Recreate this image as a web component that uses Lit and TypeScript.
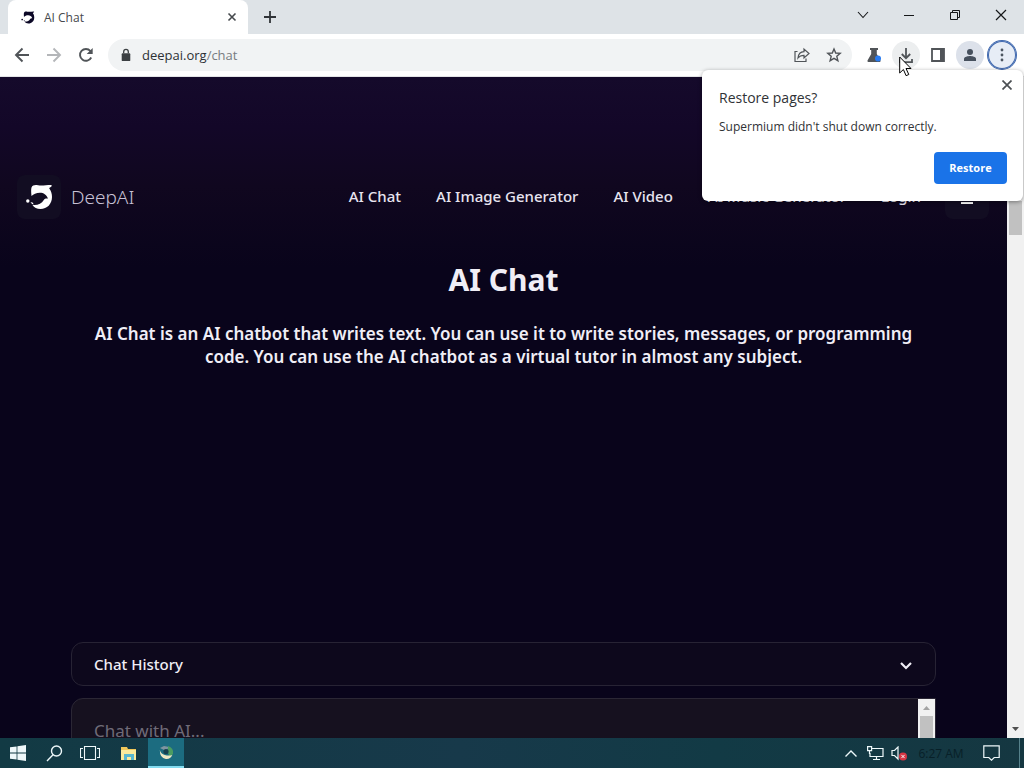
import { LitElement, html, css, svg } from "lit";
import { customElement } from "lit/decorators.js";

const bird = svg`
  <path fill="currentColor" d="M5.500 12C5 8 5 5 5.500 3.500 6.500 1.200 9 .8 12 1.300c4 .6 8-.2 13-.3 1.200.1 1 1.600-1 2.400-.8.300-1 .9-.4 1.600 1.600 2 2.400 5 2.400 8 0 7-5 12-11.500 12-3.500 0-6.500-1.500-8-4 5 .6 9-1 11.300-5 .9-1.500 2.200-1.700 4.200-1.500C20.500 10.500 17.500 8.700 14 8.700c-4 0-6.500 1.300-8.500 3.300z"/>
  <circle cx="1.800" cy="17" r="1.700" fill="currentColor"/>
  <path fill="currentColor" d="M4.500 18l2.500.8.500 1.700-1.500-.5z"/>`;

@customElement("browser-bar")
class BrowserBar extends LitElement {
  static styles = css`
    :host { display: block; font-family: "Open Sans", "Noto Sans", sans-serif; color: #3c4043; }
    button { border: 0; padding: 0; background: none; color: inherit; display: grid; place-items: center; flex: none; }
    svg { display: block; fill: none; stroke: currentColor; overflow: visible; }
    .tabs { display: flex; height: 34px; background: #dee3e7; align-items: center; }
    .tab { display: flex; align-items: center; align-self: stretch; flex: 0 1 240px; box-sizing: border-box; padding: 0 8px 0 12px; margin-left: 8px; background: #fff; border-radius: 8px 8px 0 0; gap: 8px; font-size: 12px; color: #45494d; }
    .tab .favicon { color: #0c0826; stroke: none; }
    .title { flex: 1; }
    .tab button { width: 16px; height: 16px; }
    .add { width: 28px; height: 28px; margin-left: 8px; color: #303438; }
    .grow { flex: 1; }
    .win { width: 46px; height: 30px; align-self: flex-start; color: #151719; }
    .tools { display: flex; height: 43px; align-items: center; background: #fff; box-sizing: border-box; padding: 0 8px; gap: 4px; border-bottom: 1px solid #e4e5e7; }
    .tools button { width: 28px; height: 28px; border-radius: 50%; color: #505458; }
    .tools .off { color: #b4b6b9; }
    .address { display: flex; align-items: center; flex: 1; height: 32px; background: #f1f3f4; border-radius: 16px; margin: 0 4px; padding: 0 4px 0 10px; gap: 4px; }
    .address .lock { margin-right: 4px; }
    .address a { flex: 1; font-size: 13px; line-height: 20px; color: #2d3034; text-decoration: none; }
    .address span { color: #777b80; }
    .tools .down { background: #eceeef; }
    .tools .avatar { background: #dce1ea; color: #46505d; }
    .tools .menu { background: #e7edf6; box-shadow: 0 0 0 1px #3f68ae, inset 0 0 0 1px #3f68ae; color: #4c5560; }
  `;
  render() {
    return html`
      <div class="tabs">
        <div class="tab">
          <svg class="favicon" width="16" height="13" viewBox="0 0 27 26">${bird}</svg>
          <span class="title">AI Chat</span>
          <button aria-label="Close tab"><svg width="8" height="8" stroke-width="1.6"><path d="M.5.5l7 7m0-7l-7 7"/></svg></button>
        </div>
        <button class="add" aria-label="New tab"><svg width="12" height="12" stroke-width="1.800"><path d="M6 0v12M0 6h12"/></svg></button>
        <span class="grow"></span>
        <button class="win" aria-label="Search tabs"><svg width="10" height="6" stroke-width="1.100"><path d="M0 0l5 5.500L10 0"/></svg></button>
        <button class="win" aria-label="Minimize"><svg width="10" height="1"><path d="M0 .5h10"/></svg></button>
        <button class="win" aria-label="Restore window"><svg width="10" height="10"><path d="M.5 2.500h7v7h-7zM2.500 2.500v-2h7v7h-2"/></svg></button>
        <button class="win" aria-label="Close"><svg width="10" height="10" stroke-width="1.200"><path d="M0 0l10 10m0-10L0 10"/></svg></button>
      </div>
      <div class="tools">
        <button aria-label="Back"><svg width="14" height="14" stroke-width="1.900"><path d="M14 7H1M7.500.5L1 7l6.500 6.500"/></svg></button>
        <button class="off" aria-label="Forward"><svg width="14" height="14" stroke-width="1.900"><path d="M0 7h13M6.500.5L13 7l-6.500 6.500"/></svg></button>
        <button aria-label="Reload"><svg width="14" height="14" stroke-width="1.900"><path d="M12.200 9.500a5.900 5.900 0 1 1-.8-6.500l1 1.300"/><path fill="currentColor" stroke="none" d="M13.700 0v6H7.700z"/></svg></button>
        <div class="address">
          <svg class="lock" width="16" height="12" viewBox="0 0 16 14"><path fill="currentColor" stroke="none" d="M4 5h8q1 0 1 1v7q0 1-1 1H4q-1 0-1-1V6q0-1 1-1z"/><path stroke-width="1.500" d="M5.300 5V3.200a2.700 2.700 0 0 1 5.400 0V5"/></svg>
          <a href="#chat">deepai.org<span>/chat</span></a>
          <button aria-label="Share"><svg width="16" height="14" stroke-width="1.200"><path d="M3.500 3.500H1v10h11v-3M4 10c.4-4 2.500-6.200 6-6.300V1l5 4.500-5 4.500V7.300C7.500 7.300 5.500 8 4 10z"/></svg></button>
          <button aria-label="Bookmark"><svg width="14" height="14" stroke-width="1.400"><path d="M7 1l1.700 4 4.500.4-3.400 2.900 1.100 4.400L7 10.400l-3.900 2.300 1.100-4.400L.8 5.400 5.300 5z"/></svg></button>
        </div>
        <button aria-label="Experiments"><svg width="16" height="16"><path fill="currentColor" stroke="none" d="M4 1h8v2h-1.200v4l3.700 6.500q.3 1.500-1 1.500h-11q-1.300 0-1-1.500L5.200 7V3H4z"/><circle cx="12" cy="11.500" r="3" fill="#287bf0" stroke="none"/></svg></button>
        <button class="down" aria-label="Downloads"><svg width="14" height="15" stroke-width="1.800"><path d="M7 0v10M2.800 6L7 10.200 11.200 6M1 11v3.200h12V11"/></svg></button>
        <button aria-label="Side panel"><svg width="14" height="14"><path stroke-width="1.800" d="M1 1h12v12H1z"/><path fill="currentColor" stroke="none" d="M9 1h4v12H9z"/></svg></button>
        <button class="avatar" aria-label="Profile"><svg width="12" height="12"><g fill="currentColor" stroke="none"><circle cx="6" cy="3" r="3"/><path d="M0 12V9.800C0 7.800 4 7 6 7s6 .8 6 2.800V12z"/></g></svg></button>
        <button class="menu" aria-label="Menu"><svg width="4" height="14"><g fill="currentColor" stroke="none"><circle cx="2" cy="2" r="1.400"/><circle cx="2" cy="7" r="1.400"/><circle cx="2" cy="12" r="1.400"/></g></svg></button>
      </div>`;
  }
}

@customElement("chat-page")
class ChatPage extends LitElement {
  static styles = css`
    :host { display: flex; overflow: hidden; min-height: 0; font-family: "Noto Sans", sans-serif; color: #f0eef6; background: linear-gradient(#150a2b, #130728 50px, #10071f 110px, #09041b 190px); }
    .page { flex: 1; min-width: 0; overflow: hidden; }
    header { display: flex; align-items: center; padding: 98px 18px 0 17px; }
    .brand { display: flex; align-items: center; gap: 10px; color: #c8c2d6; text-decoration: none; font-size: 19px; font-weight: 300; line-height: 24px; }
    .mark { display: grid; place-items: center; width: 44px; height: 44px; border-radius: 8px; background: #120d22; color: #fff; }
    nav { display: flex; flex: 1; justify-content: flex-end; gap: 35px; margin: 0 24px 2px 0; }
    nav a { color: #e7e4ef; text-decoration: none; font-size: 15px; line-height: 24px; font-weight: 500; white-space: nowrap; }
    .menu { width: 44px; height: 44px; border: 0; border-radius: 8px; background: #120d22; color: #fff; padding: 0; display: grid; place-items: center; }
    h1 { margin: 39px 0 0; text-align: center; font-size: 30px; line-height: 44px; font-weight: 700; }
    .intro { margin: 20px auto 0; max-width: 865px; text-align: center; font-size: 17px; line-height: 23px; font-weight: 600; }
    main { padding: 274px 71px 0; }
    .history { box-sizing: border-box; width: 100%; height: 44px; display: flex; align-items: center; justify-content: space-between; padding: 0 23px 0 22px; border: 1px solid #272334; border-radius: 12px; background: #0d081c; color: #f0eef6; font: 500 15px/24px "Noto Sans", sans-serif; }
    .history svg { margin-top: 4px; }
    .ask { display: flex; height: 160px; margin-top: 12px; border: 1px solid #2b2735; border-radius: 12px 0 0 0; background: #16111f; overflow: hidden; }
    textarea { flex: 1; min-width: 0; resize: none; border: 0; outline: 0; background: none; color: #fff; padding: 20px 22px; font: 400 17px/24px "Noto Sans", sans-serif; overflow: hidden; }
    textarea::placeholder { color: #6f6b78; opacity: 1; }
    .bar { width: 17px; background: #f1f1f1; display: flex; flex-direction: column; align-items: center; flex: none; }
    .bar svg { flex: none; }
    .thumb { width: 13px; background: #c1c1c1; }
    .ask .thumb { flex: 1; }
    .main-bar { justify-content: space-between; }
    .main-bar .thumb { height: 34px; margin-top: 124px; }
  `;
  render() {
    return html`
      <div class="page">
        <header>
          <a class="brand" href="#home"><span class="mark"><svg width="27" height="26" viewBox="0 0 27 26">${bird}</svg></span>DeepAI</a>
          <nav>
            ${["AI Chat", "AI Image Generator", "AI Video", "AI Music Generator", "Login"].map((t) => html`<a href="#${t}">${t}</a>`)}
          </nav>
          <button class="menu" aria-label="Menu"><svg width="12" height="14" stroke="currentColor" stroke-width="2"><path d="M0 1h12M0 7h12M0 13h12"/></svg></button>
        </header>
        <h1>AI Chat</h1>
        <p class="intro">AI Chat is an AI chatbot that writes text. You can use it to write stories, messages, or programming code. You can use the AI chatbot as a virtual tutor in almost any subject.</p>
        <main>
          <button class="history">Chat History<svg width="12" height="8" fill="none" stroke="currentColor" stroke-width="2.200"><path d="M1 1l5 5 5-5"/></svg></button>
          <div class="ask">
            <textarea aria-label="Chat with AI" placeholder="Chat with AI..."></textarea>
            <div class="bar"><svg width="17" height="17"><path fill="#a3a3a3" d="M5 11l3.500-4 3.500 4z"/></svg><div class="thumb"></div></div>
          </div>
        </main>
      </div>
      <div class="bar main-bar"><div class="thumb"></div><svg width="17" height="17"><path fill="#505050" d="M5 6l3.500 4L12 6z"/></svg></div>`;
  }
}

@customElement("restore-bubble")
class RestoreBubble extends LitElement {
  static styles = css`
    :host { position: absolute; top: 70px; right: 1px; width: 321px; box-sizing: border-box; padding: 16px 16px 17px 17px; background: #fff; border-radius: 6px; box-shadow: 0 1px 4px #0006; font-family: "Open Sans", "Noto Sans", sans-serif; color: #303236; }
    h2 { margin: 0; font-size: 14px; line-height: 24px; font-weight: 400; }
    p { margin: 6px 0 0; font-size: 12px; line-height: 22px; }
    .row { display: flex; justify-content: flex-end; margin-top: 14px; }
    .restore { width: 73px; height: 32px; border: 0; border-radius: 4px; background: #1a73e8; color: #fff; padding: 0; font: 700 11px/16px "Open Sans", sans-serif; }
    .close { position: absolute; top: 7px; right: 8px; width: 16px; height: 16px; border: 0; padding: 0; background: none; color: #4b4f53; display: grid; place-items: center; }
  `;
  render() {
    return html`
      <h2>Restore pages?</h2>
      <p>Supermium didn't shut down correctly.</p>
      <div class="row"><button class="restore">Restore</button></div>
      <button class="close" aria-label="Close"><svg width="10" height="10" stroke="currentColor" stroke-width="1.700"><path d="M.5.5l9 9m0-9l-9 9"/></svg></button>`;
  }
}

@customElement("task-bar")
class TaskBar extends LitElement {
  static styles = css`
    :host { display: flex; height: 30px; align-items: center; background: linear-gradient(90deg, #123a44, #17394a 45%, #123a45 70%, #153741); color: #eef8fa; font-family: "Open Sans", "Noto Sans", sans-serif; }
    button { width: 36px; height: 30px; border: 0; padding: 0; background: none; color: inherit; display: grid; place-items: center; flex: none; box-sizing: border-box; }
    svg { display: block; fill: none; stroke: currentColor; }
    .apps { display: flex; gap: 2px; margin-left: 2px; }
    .active { background: #1c6c80; border-bottom: 2px solid #84dcf0; }
    .gap { flex: 1; }
    .small { width: 24px; }
    time { font-size: 12px; color: #082028; width: 60px; text-align: center; white-space: nowrap; }
    .note { width: 40px; }
    .desk { width: 4px; height: 30px; border-left: 1px solid #56818b; margin-left: 8px; }
  `;
  render() {
    return html`
      <button aria-label="Start"><svg width="16" height="16" viewBox="0 0 16 16"><path fill="currentColor" stroke="none" d="M0 2.300L6.600 1.400v6.200H0zM7.400 1.300L16 0v7.600H7.400zM0 8.400h6.600v6.200L0 13.700zM7.400 8.400H16V16l-8.600-1.300z"/></svg></button>
      <button aria-label="Search"><svg width="17" height="17" stroke-width="1.400"><circle cx="10.500" cy="6" r="5"/><path d="M7 9.700L1 16"/></svg></button>
      <button aria-label="Task view"><svg width="20" height="15" stroke-width="1.100"><path d="M4.500.5h11v13h-11zM3 2.500H.5v9H3M17 2.500h2.500v9H17"/></svg></button>
      <div class="apps">
        <button aria-label="Files"><svg width="17" height="15"><g stroke="none"><path fill="#f1c75b" d="M1 1h6l1 2h8v11H1z"/><path fill="#fbeb9c" d="M1 4h15v10H1z"/><path fill="#58b8d0" d="M4 8h10v6h-3v-3H7v3H4z"/></g></svg></button>
        <button class="active" aria-label="Supermium"><svg width="15" height="15" viewBox="0 0 15 15"><g stroke="none"><path fill="#8095a0" d="M1 3l4-2 5 1-3 4z"/><path fill="#4a9c62" d="M9 1q6 2 5 8l-3 3-2-4z"/><path fill="#eee8c4" d="M.8 5q1 4 5 5 4 1 7.500 0-2 4.500-6.500 4Q.8 13 .8 5z"/><circle cx="7" cy="6.500" r="2.600" fill="#17404e"/></g></svg></button>
      </div>
      <span class="gap"></span>
      <button class="small" aria-label="Hidden icons"><svg width="12" height="7" stroke-width="1.400"><path d="M.5 6.500L6 1l5.500 5.500"/></svg></button>
      <button class="small" aria-label="Network"><svg width="17" height="15" stroke-width="1.200"><path d="M5 2.500h11v8H3V7M9.500 10.500v3M6 13.500h7M.6.600h4v4h-4zM2.500 5v3"/></svg></button>
      <button class="small" aria-label="Volume muted"><svg width="16" height="15"><path stroke-width="1.200" d="M1 4.500h2.500L7 1v12L3.500 9.500H1z"/><circle cx="12" cy="10.500" r="4" fill="#d73442" stroke="none"/><path d="M10.400 8.900l3.200 3.200m0-3.200l-3.200 3.200"/></svg></button>
      <time>6:27 AM</time>
      <button class="note" aria-label="Notifications"><svg width="17" height="16" stroke-width="1.200"><path d="M.8.800h15.400v11.700h-5l-2.700 2.700-2.700-2.700h-5z"/></svg></button>
      <span class="desk"></span>`;
  }
}

@customElement("mouse-pointer")
class MousePointer extends LitElement {
  static styles = css`:host { position: absolute; top: 56px; right: 112px; pointer-events: none; } svg { display: block; }`;
  render() {
    return html`<svg width="13" height="21" viewBox="0 0 13 21"><path fill="#fff" stroke="#000" d="M.7 1v16l3.700-3.500 2.700 6.200 2.700-1.200L7 12.500h5z"/></svg>`;
  }
}

@customElement("app-root")
class AppRoot extends LitElement {
  static styles = css`
    :host { display: grid; position: relative; grid-template-rows: auto minmax(0, 1fr) auto; height: 100vh; overflow: hidden; }
  `;
  render() {
    return html`
      <browser-bar></browser-bar>
      <chat-page></chat-page>
      <task-bar></task-bar>
      <restore-bubble></restore-bubble>
      <mouse-pointer></mouse-pointer>`;
  }
}
